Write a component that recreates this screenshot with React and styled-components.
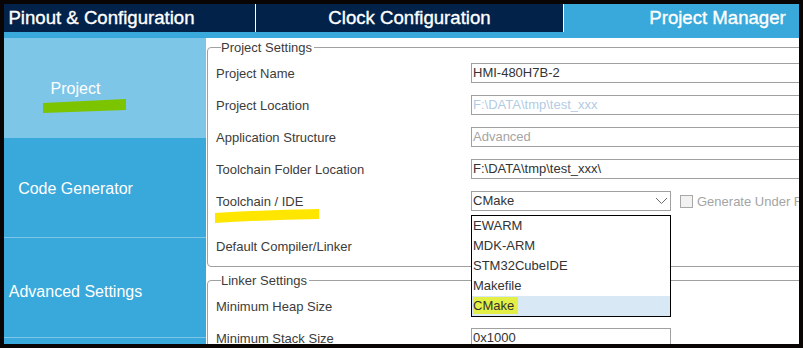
import React from "react";
import styled, { createGlobalStyle } from "styled-components";

const Global = createGlobalStyle`
  html, body { margin: 0; padding: 0; background: #000; }
  body { font-family: "Liberation Sans", Arial, sans-serif; }
`;

const Frame = styled.div`
  width: 803px;
  height: 348px;
  box-sizing: border-box;
  padding: 4px;
  background: #0a0505;
`;

const Viewport = styled.div`
  width: 795px;
  height: 340px;
  overflow: hidden;
  background: #fff;
`;

const AppShell = styled.div`
  width: 1100px;
  margin-left: -56px;
  display: flex;
  flex-direction: column;
`;

const TabBar = styled.div`
  display: flex;
  height: 28px;
  background: #03224a;
`;

const Tab = styled.div`
  flex: 0 0 307px;
  border-right: 1px solid #ffffff;
  background: ${(p) => (p.$active ? "#39a8da" : "#03224a")};
  color: #fff;
  font-size: 18.6px;
  -webkit-text-stroke: 0.35px #fff;
  display: flex;
  align-items: center;
  justify-content: center;
  line-height: 28px;
`;

const Strip = styled.div`
  height: 6px;
  background: #39a8da;
`;

const Body = styled.div`
  display: flex;
  height: 320px;
`;

const Sidebar = styled.div`
  flex: 0 0 258px;
  background: #39a8da;
  display: flex;
  flex-direction: column;
`;

const NavItem = styled.div`
  position: relative;
  flex: 0 0 100px;
  border-bottom: 1px solid #7ec6e8;
  background: ${(p) => (p.$active ? "#7ec6e8" : "#39a8da")};
  color: #fff;
  font-size: 16px;
  display: flex;
  align-items: center;
  justify-content: center;
  padding-top: ${(p) => p.$down || 0}px;
  padding-right: 3px;
  box-sizing: border-box;
`;

const Marker = styled.svg`
  position: absolute;
  pointer-events: none;
`;

const Content = styled.div`
  flex: 1;
  background: #fff;
  padding-top: 2px;
  padding-left: 1px;
`;

const Fieldset = styled.fieldset`
  margin: ${(p) => p.$top || 0}px 0 0 0;
  padding: 2px 0 ${(p) => p.$bottom || 0}px 8px;
  border: 1px solid #a0a0a0;
  border-radius: 4px;
  min-width: 0;
`;

const Legend = styled.legend`
  margin-left: 5px;
  padding: 0 2px 0 0;
  font-size: 13px;
  line-height: 15px;
  color: #3c3c3c;
`;

const Row = styled.div`
  display: grid;
  grid-template-columns: 255px auto;
  align-items: center;
  height: 32px;
  margin-top: ${(p) => p.$gap || 0}px;
  position: relative;
`;

const Label = styled.div`
  font-size: 13px;
  color: #3c3c3c;
  position: relative;
`;

const Field = styled.div`
  box-sizing: border-box;
  height: 20px;
  width: ${(p) => p.$w || 400}px;
  border: 1px solid #a0a0a0;
  background: #fff;
  font-size: 13px;
  line-height: 18px;
  padding-left: 1px;
  color: ${(p) =>
    p.$tone === "muted" ? "#a4a4a4" : p.$tone === "link" ? "#b3cbe3" : "#333"};
  white-space: nowrap;
`;

const Controls = styled.div`
  display: flex;
  align-items: center;
`;

const SelectWrap = styled.div`
  position: relative;
`;

const Select = styled.div`
  box-sizing: border-box;
  height: 20px;
  width: 200px;
  border: 1px solid #a0a0a0;
  background: #fff;
  font-size: 13px;
  line-height: 18px;
  padding-left: 1px;
  color: #333;
  display: flex;
  align-items: center;
  justify-content: space-between;
  padding-right: 2px;
`;

const List = styled.div`
  position: absolute;
  top: 24px;
  left: 0;
  width: 200px;
  box-sizing: border-box;
  border: 1px solid #000;
  background: #fff;
  z-index: 5;
  display: flex;
  flex-direction: column;
`;

const Option = styled.div`
  height: 20px;
  line-height: 20px;
  font-size: 13px;
  padding-left: 1px;
  color: #333;
  background: ${(p) => (p.$selected ? "#d9e8f5" : "transparent")};
`;

const Mark = styled.span`
  background: ${(p) => p.$color};
  padding: 1px 0;
`;

const Check = styled.div`
  margin-left: 9px;
  width: 11px;
  height: 11px;
  border: 1px solid #a8a8a8;
  background: #f2f2f2;
`;

const CheckText = styled.span`
  margin-left: 4px;
  font-size: 13px;
  color: #a4a4a4;
  white-space: nowrap;
`;

export default function App() {
  return (
    <>
      <Global />
      <Frame>
        <Viewport>
          <AppShell>
            <TabBar>
              <Tab>Pinout &amp; Configuration</Tab>
              <Tab>Clock Configuration</Tab>
              <Tab $active>Project Manager</Tab>
            </TabBar>
            <Strip />
            <Body>
              <Sidebar>
                <NavItem $active $down={2}>
                  Project
                  <Marker
                    width="86"
                    height="18"
                    viewBox="0 0 86 18"
                    style={{ left: 94, top: 59 }}
                  >
                    <path d="M1 6 L84 2 L84 13 L1 16 Z" fill="#7cc400" />
                  </Marker>
                </NavItem>
                <NavItem $down={2}>Code Generator</NavItem>
                <NavItem $down={8}>Advanced Settings</NavItem>
                <NavItem />
              </Sidebar>
              <Content>
                <Fieldset $bottom={4}>
                  <Legend>Project Settings</Legend>
                  <Row>
                    <Label>Project Name</Label>
                    <Field>HMI-480H7B-2</Field>
                  </Row>
                  <Row>
                    <Label>Project Location</Label>
                    <Field $tone="link">F:\DATA\tmp\test_xxx</Field>
                  </Row>
                  <Row>
                    <Label>Application Structure</Label>
                    <Field $tone="muted">Advanced</Field>
                  </Row>
                  <Row>
                    <Label>Toolchain Folder Location</Label>
                    <Field>F:\DATA\tmp\test_xxx\</Field>
                  </Row>
                  <Row>
                    <Label>
                      Toolchain / IDE
                      <Marker
                        width="108"
                        height="16"
                        viewBox="0 0 108 16"
                        style={{ left: -3, top: 14 }}
                      >
                        <path
                          d="M2 5 Q50 2 106 1 L106 11 Q50 12 2 15 Z"
                          fill="#ffe600"
                        />
                      </Marker>
                    </Label>
                    <Controls>
                      <SelectWrap>
                        <Select>
                          <span>CMake</span>
                          <svg width="13" height="8" viewBox="0 0 13 8">
                            <path
                              d="M1 1 L6.5 6.5 L12 1"
                              fill="none"
                              stroke="#6a6a6a"
                              strokeWidth="1"
                            />
                          </svg>
                        </Select>
                        <List>
                          <Option>EWARM</Option>
                          <Option>MDK-ARM</Option>
                          <Option>STM32CubeIDE</Option>
                          <Option>Makefile</Option>
                          <Option $selected>
                            <Mark $color="#e3ef45">CMake&nbsp;</Mark>
                          </Option>
                        </List>
                      </SelectWrap>
                      <Check />
                      <CheckText>Generate Under Root</CheckText>
                    </Controls>
                  </Row>
                  <Row $gap={13}>
                    <Label>Default Compiler/Linker</Label>
                    <div />
                  </Row>
                </Fieldset>
                <Fieldset $top={6}>
                  <Legend>Linker Settings</Legend>
                  <Row>
                    <Label>Minimum Heap Size</Label>
                    <Field $w={200} />
                  </Row>
                  <Row>
                    <Label>Minimum Stack Size</Label>
                    <Field $w={200}>0x1000</Field>
                  </Row>
                </Fieldset>
              </Content>
            </Body>
          </AppShell>
        </Viewport>
      </Frame>
    </>
  );
}
